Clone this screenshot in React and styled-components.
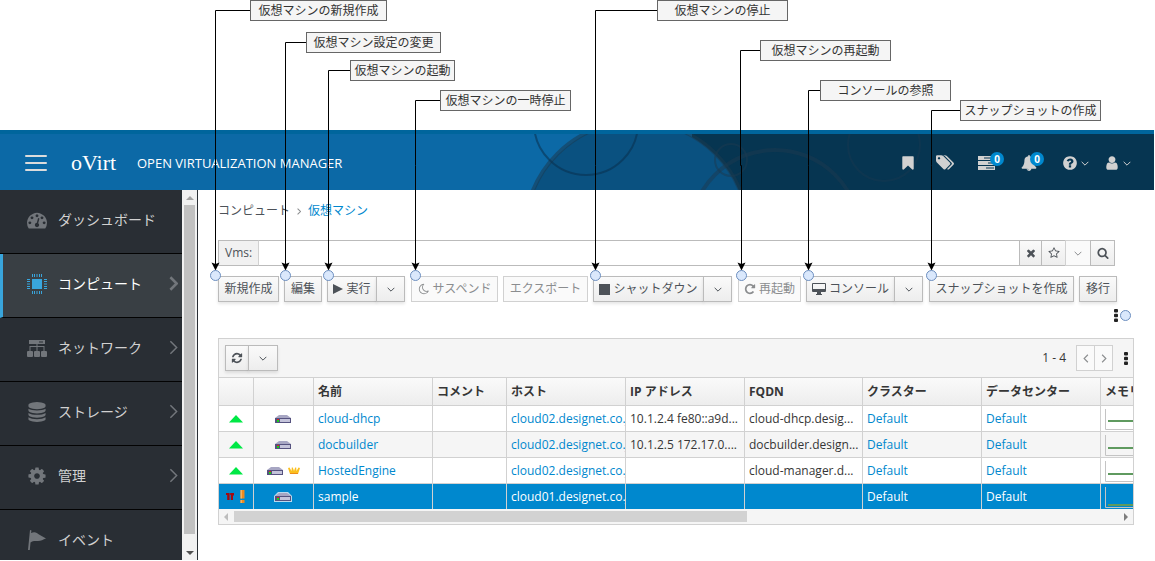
import React from "react";
import styled, { createGlobalStyle, css } from "styled-components";

const GlobalStyle = createGlobalStyle`
  *, *::before, *::after { box-sizing: border-box; }
  body {
    margin: 0;
    background: #fff;
    color: #363636;
    font: 12px/20px "Open Sans", "Noto Sans CJK JP", sans-serif;
  }
  button, input { font: inherit; color: inherit; }
  a { text-decoration: none; }
`;

/* ---------- icons ---------- */

const paths = {
  times: "M1490 1322q0 40-28 68l-136 136q-28 28-68 28t-68-28l-294-294-294 294q-28 28-68 28t-68-28l-136-136q-28-28-28-68t28-68l294-294-294-294q-28-28-28-68t28-68l136-136q28-28 68-28t68 28l294 294 294-294q28-28 68-28t68 28l136 136q28 28 28 68t-28 68l-294 294 294 294q28 28 28 68z",
  search: "M1216 832q0-185-131.5-316.5t-316.5-131.5-316.5 131.5-131.5 316.5 131.5 316.5 316.5 131.5 316.5-131.5 131.5-316.5zm512 832q0 52-38 90t-90 38q-54 0-90-38l-343-342q-179 124-399 124-143 0-273.5-55.5t-225-150-150-225-55.5-273.5 55.5-273.5 150-225 225-150 273.5-55.5 273.5 55.5 225 150 150 225 55.5 273.5q0 220-124 399l343 343q37 37 37 90z",
  star: "M1201 1004l306-297-422-62-189-382-189 382-422 62 306 297-73 421 378-199 377 199zm527-357q0 22-26 48l-363 354 86 500q1 7 1 20 0 50-41 50-19 0-40-12l-449-236-449 236q-22 12-40 12-21 0-31.5-14.5t-10.5-35.5q0-6 2-20l86-500-364-354q-25-27-25-48 0-37 56-46l502-73 225-455q19-41 49-41t49 41l225 455 502 73q56 9 56 46z",
  bookmark: "M1420 128q23 0 44 9 33 13 52.5 41t19.5 62v1289q0 34-19.5 62t-52.5 41q-19 8-44 8-48 0-83-32l-441-424-441 424q-36 33-83 33-23 0-44-9-33-13-52.5-41t-19.5-62v-1289q0-34 19.5-62t52.5-41q21-9 44-9h1048z",
  bell: "M912 1696q0-16-16-16-59 0-101.5-42.5t-42.5-101.5q0-16-16-16t-16 16q0 73 51.5 124.5t124.5 51.5q16 0 16-16zm816-288q0 52-38 90t-90 38h-448q0 106-75 181t-181 75-181-75-75-181h-448q-52 0-90-38t-38-90q50-42 91-88t85-119.5 74.5-158.5 50-206 19.5-260q0-152 117-282.5t307-158.5q-8-19-8-39 0-40 28-68t68-28 68 28 28 68q0 20-8 39 190 28 307 158.5t117 282.5q0 139 19.5 260t50 206 74.5 158.5 85 119.5 91 88z",
  help: "M1024 1376v-192q0-14-9-23t-23-9h-192q-14 0-23 9t-9 23v192q0 14 9 23t23 9h192q14 0 23-9t9-23zm256-672q0-88-55.5-163t-138.5-116-170-41q-243 0-371 213-15 24 8 42l132 100q7 6 19 6 16 0 25-12 53-68 86-92 34-24 86-24 48 0 85.5 26t37.5 59q0 38-20 61t-68 45q-63 28-115.5 86.5t-52.5 125.5v36q0 14 9 23t23 9h192q14 0 23-9t9-23q0-19 21.5-49.5t54.5-49.5q32-18 49-28.5t46-35 44.5-48 28-60.5 12.5-81zm384 192q0 209-103 385.5t-279.5 279.5-385.5 103-385.5-103-279.5-279.5-103-385.5 103-385.5 279.5-279.5 385.5-103 385.5 103 279.5 279.5 103 385.5z",
  user: "M1536 1399q0 109-62.5 187t-150.5 78h-854q-88 0-150.5-78t-62.5-187q0-85 8.5-160.5t31.5-152 58.5-131 94-89 134.5-34.5q131 128 313 128t313-128q76 0 134.5 34.5t94 89 58.5 131 31.5 152 8.5 160.5zm-256-887q0 159-112.5 271.5t-271.5 112.5-271.5-112.5-112.5-271.5 112.5-271.5 271.5-112.5 271.5 112.5 112.5 271.5z",
  tags: "M448 448q0-53-37.5-90.5t-90.5-37.5-90.5 37.5-37.5 90.5 37.5 90.5 90.5 37.5 90.5-37.5 37.5-90.5zm1067 576q0 53-37 90l-491 492q-39 37-91 37-53 0-90-37l-715-716q-38-37-64.5-101t-26.5-117v-416q0-52 38-90t90-38h416q53 0 117 26.5t102 64.5l715 714q37 39 37 91zm384 0q0 53-37 90l-491 492q-39 37-91 37-36 0-59-14t-53-45l470-470q37-37 37-90 0-52-37-91l-715-714q-38-38-102-64.5t-117-26.5h224q53 0 117 26.5t102 64.5l715 714q37 39 37 91z",
  cog: "M1152 896q0-106-75-181t-181-75-181 75-75 181 75 181 181 75 181-75 75-181zm512-109v222q0 12-8 23t-20 13l-185 28q-19 54-39 91 35 50 107 138 10 12 10 25t-9 23q-27 37-99 108t-94 71q-12 0-26-9l-138-108q-44 23-91 38-16 136-29 186-7 28-36 28h-222q-14 0-24.5-8.5t-11.5-21.5l-28-184q-49-16-90-37l-141 107q-10 9-25 9-14 0-25-11-126-114-165-168-7-10-7-23 0-12 8-23 15-21 51-66.5t54-70.5q-27-50-41-99l-183-27q-13-2-21-12.5t-8-23.5v-222q0-12 8-23t19-13l186-28q14-46 39-92-40-57-107-138-10-12-10-24 0-10 9-23 26-36 98.5-107.5t94.5-71.5q13 0 26 10l138 107q44-23 91-38 16-136 29-186 7-28 36-28h222q14 0 24.5 8.5t11.5 21.5l28 184q49 16 90 37l142-107q9-9 24-9 13 0 25 10 129 119 165 170 7 8 7 22 0 12-8 23-15 21-51 66.5t-54 70.5q26 50 41 98l183 28q13 2 21 12.5t8 23.5z",
  database: "M896 768q237 0 443-43t325-127v170q0 69-103 128t-280 93.5-385 34.5-385-34.5-280-93.5-103-128v-170q119 84 325 127t443 43zm0 768q237 0 443-43t325-127v170q0 69-103 128t-280 93.5-385 34.5-385-34.5-280-93.5-103-128v-170q119 84 325 127t443 43zm0-384q237 0 443-43t325-127v170q0 69-103 128t-280 93.5-385 34.5-385-34.5-280-93.5-103-128v-170q119 84 325 127t443 43zm0-1152q208 0 385 34.5t280 93.5 103 128v128q0 69-103 128t-280 93.5-385 34.5-385-34.5-280-93.5-103-128v-128q0-69 103-128t280-93.5 385-34.5z",
  gauge: "M384 1152q0-53-37.5-90.5t-90.5-37.5-90.5 37.5-37.5 90.5 37.5 90.5 90.5 37.5 90.5-37.5 37.5-90.5zm192-448q0-53-37.5-90.5t-90.5-37.5-90.5 37.5-37.5 90.5 37.5 90.5 90.5 37.5 90.5-37.5 37.5-90.5zm428 481l101-382q6-26-7.5-48.5t-38.5-29.5-48 6.5-30 39.5l-101 382q-60 5-107 43.5t-63 98.5q-20 77 20 146t117 89 146-20 89-117q16-60-6-117t-72-91zm660-33q0-53-37.5-90.5t-90.5-37.5-90.5 37.5-37.5 90.5 37.5 90.5 90.5 37.5 90.5-37.5 37.5-90.5zm-640-640q0-53-37.5-90.5t-90.5-37.5-90.5 37.5-37.5 90.5 37.5 90.5 90.5 37.5 90.5-37.5 37.5-90.5zm448 192q0-53-37.5-90.5t-90.5-37.5-90.5 37.5-37.5 90.5 37.5 90.5 90.5 37.5 90.5-37.5 37.5-90.5zm320 448q0 261-141 483-19 29-54 29h-1402q-35 0-54-29-141-221-141-483 0-182 71-348t191-286 286-191 348-71 348 71 286 191 191 286 71 348z",
  refresh: "M1639 1056q0 5-1 7-64 268-268 434.5t-478 166.5q-146 0-282.5-55t-243.5-157l-129 129q-19 19-45 19t-45-19-19-45v-448q0-26 19-45t45-19h448q26 0 45 19t19 45-19 45l-137 137q71 66 161 102t187 36q134 0 250-65t186-179q11-17 53-117 8-23 30-23h192q13 0 22.5 9.5t9.5 22.5zm25-800v448q0 26-19 45t-45 19h-448q-26 0-45-19t-19-45 19-45l138-138q-148-137-349-137-134 0-250 65t-186 179q-11 17-53 117-8 23-30 23h-199q-13 0-22.5-9.5t-9.5-22.5v-7q65-268 270-434.5t480-166.5q146 0 284 55.5t245 156.5l130-129q19-19 45-19t45 19 19 45z",
  repeat: "M1664 256v448q0 26-19 45t-45 19h-448q-42 0-59-40-17-39 14-69l138-138q-148-137-349-137-104 0-198.5 40.5t-163.5 109.5-109.5 163.5-40.5 198.5 40.5 198.5 109.5 163.5 163.5 109.5 198.5 40.5q119 0 225-52t179-147q7-10 23-12 15 0 25 9l137 138q9 8 9.5 20.5t-7.5 22.5q-109 132-264 204.5t-327 72.5q-156 0-298-61t-245-164-164-245-61-298 61-298 164-245 245-164 298-61q147 0 284.5 55.5t244.5 156.5l130-129q29-31 70-14 39 17 39 59z",
  moon: "M1390 1303q-54 9-110 9-182 0-337-90t-245-245-90-337q0-189 104-350-201 60-328.5 229t-127.5 384q0 130 51 248.5t136.5 204 204 136.5 248.5 51q144 0 273.5-61.5t220.5-171.5zm203-85q-94 203-283.5 324.5t-413.5 121.5q-156 0-298-61t-245-164-164-245-61-298q0-153 57.5-292.5t156-241.5 235.5-164.5 290-68.5q44-2 61 39 18 41-15 72-86 78-131.5 181.5t-45.5 218.5q0 148 73 273t198 198 273 73q118 0 228-51 41-18 72 13 14 14 17.5 34t-4.5 38z",
};

const Svg = styled.svg`
  display: block;
  flex: none;
  fill: currentColor;
`;

function Glyph({ name, size = 14, box = "0 0 1792 1792" }) {
  return (
    <Svg width={size} height={size} viewBox={box} aria-hidden="true">
      <path d={paths[name]} />
    </Svg>
  );
}

function Caret({ dir = "down", w = 8, h = 5, weight = 1.5 }) {
  const d = { down: "M1 1l5 5 5-5", right: "M1 1l5 5-5 5", left: "M6 1L1 6l5 5" }[dir];
  return (
    <Svg width={w} height={h} viewBox={dir === "down" ? "0 0 12 7" : "0 0 7 12"} aria-hidden="true">
      <path d={d} fill="none" stroke="currentColor" strokeWidth={weight} />
    </Svg>
  );
}

const Chip = () => (
  <Svg width="20" height="20" viewBox="0 0 20 20" aria-hidden="true">
    <path d="M5 5h10v10H5z" />
    <path d="M5.500 0v3M7.500 0v3M10 0v3M12.500 0v3M14.500 0v3M5.500 17v3M7.500 17v3M10 17v3M12.500 17v3M14.500 17v3M0 5.500h3M0 7.500h3M0 10h3M0 12.500h3M0 14.500h3M17 5.500h3M17 7.500h3M17 10h3M17 12.500h3M17 14.500h3" stroke="currentColor" strokeWidth="1" />
  </Svg>
);

const Cluster = () => (
  <Svg width="20" height="20" viewBox="0 0 20 20" aria-hidden="true">
    <path fillRule="evenodd" d="M2 2h16v4H2zM12 3.500v1h4v-1zM9.500 6h1v2h7v5h-1V9h-6v4h-1V9h-6v4h-1V8h7z" />
    <rect x="0" y="13" width="6" height="6" rx="1" />
    <rect x="7" y="13" width="6" height="6" rx="1" />
    <rect x="14" y="13" width="6" height="6" rx="1" />
  </Svg>
);

const Flag = () => (
  <Svg width="20" height="20" viewBox="0 0 20 20" aria-hidden="true">
    <path d="M3 0l1.500.5L4 3c4-2 6 0 8 1.500L19 8.500c-3 1-5 2.500-8 2.500-3 0-5-.5-7.500 1.500L2.800 20H1z" />
  </Svg>
);

const Tasks = () => (
  <Svg width="17" height="14" viewBox="0 0 17 14" aria-hidden="true">
    <path fillRule="evenodd" d="M0 0h17v4H0zM6 1.500v1h10v-1zM0 5h17v4H0zM10 6.500v1h6v-1zM0 10h17v4H0zM8 11.500v1h8v-1z" />
  </Svg>
);

const Play = () => (
  <Svg width="10" height="12" viewBox="0 0 10 12" aria-hidden="true"><path d="M0 1l10 5-10 5z" /></Svg>
);
const Stop = () => (
  <Svg width="11" height="11" viewBox="0 0 11 11" aria-hidden="true"><path d="M0 0h11v11H0z" /></Svg>
);
const Desktop = () => (
  <Svg width="14" height="12" viewBox="0 0 14 12" aria-hidden="true">
    <path fillRule="evenodd" d="M1 0h12a1 1 0 0 1 1 1v7a1 1 0 0 1-1 1H9v2h1v1H4v-1h1V9H1a1 1 0 0 1-1-1V1a1 1 0 0 1 1-1zM1 1v5h12V1z" />
  </Svg>
);
const Kebab = () => (
  <Svg width="4" height="13" viewBox="0 0 4 13" aria-hidden="true">
    <rect width="4" height="3.400" rx="1" />
    <rect y="4.800" width="4" height="3.400" rx="1" />
    <rect y="9.600" width="4" height="3.400" rx="1" />
  </Svg>
);
const Triangle = ({ dir }) => {
  const d = { up: "M0 4l4-4 4 4z", down: "M0 0h8L4 4z", left: "M4 0v8L0 4z", right: "M0 0v8l4-4z" }[dir];
  const flat = dir === "up" || dir === "down";
  return (
    <Svg width={flat ? 8 : 4} height={flat ? 4 : 8} viewBox={flat ? "0 0 8 4" : "0 0 4 8"} aria-hidden="true">
      <path d={d} />
    </Svg>
  );
};
const UpMark = () => (
  <Svg width="14" height="8" viewBox="0 0 14 8" role="img" aria-label="Up"><path d="M7 0l7 7.500H0z" fill="#00e845" /></Svg>
);
const DownMark = () => (
  <Svg width="8" height="8" viewBox="0 0 8 8" role="img" aria-label="Down">
    <path d="M0 0h3.600v7H1.200v-5H0zM4.200 0H8v2.500H7v4.500H4.800v-5h-.6z" fill="#a5090f" />
  </Svg>
);
const Warn = () => (
  <Svg width="5" height="13" viewBox="0 0 5 13" role="img" aria-label="Warning">
    <path d="M.5 0h4v8.500h-4zM.5 10h4v3h-4z" fill="#f08a1d" />
    <path d="M.5 0h1.500v8.500H.5zM.5 10H2v3H.5z" fill="#f9b25c" />
  </Svg>
);
const Server = ({ glow }) => (
  <Svg width="18" height="10" viewBox="0 0 18 10" aria-hidden="true">
    {glow && <path d="M4 0h10l4 4v6H0V4z" fill="#b9d9ee" />}
    <path d="M5 1h8l4 3H1z" fill="#a7a6c3" />
    <path d="M1 4h16v5H1z" fill="#55527f" />
    <path d="M6 5h10v3H6z" fill="#c4c3da" />
    <path d="M3 5h2v1H3z" fill="#e02020" />
    <path d="M3 6h2v2H3z" fill="#18d018" />
  </Svg>
);
const Crown = () => (
  <Svg width="12" height="8" viewBox="0 0 12 8" aria-hidden="true">
    <path d="M0 1l1.500-.5L3.500 4 3.800.5h1L6 4 7.200.5h1L8.500 4l2-3.500L12 1l-2 6H2z" fill="#fbbf1e" />
    <path d="M2.500 6h1v1h-1zM4.500 6h1v1h-1zM6.500 6h1v1h-1zM8.500 6h1v1h-1z" fill="#e05a12" />
  </Svg>
);

/* ---------- page frame ---------- */

const Page = styled.div`
  position: relative;
  display: flex;
  flex-direction: column;
  height: 100vh;
  padding: 130px 1px 1px 0;
  overflow: hidden;
`;

const Masthead = styled.header`
  position: relative;
  display: flex;
  align-items: center;
  flex: none;
  height: 60px;
  padding: 2px 24px 0 25px;
  border-top: 4px solid #00659c;
  background: #0c69a6;
  color: #fff;
`;

const MastheadArt = styled.svg`
  position: absolute;
  top: 0;
  right: 0;
  height: 56px;
  width: 624px;
`;

const MenuButton = styled.button`
  display: flex;
  flex-direction: column;
  gap: 5px;
  width: 22px;
  padding: 0;
  border: 0;
  background: none;
`;
const MenuBar = styled.span`
  height: 2px;
  border-radius: 1px;
  background: #dcdcdc;
`;

const Brand = styled.a`
  margin-left: 24px;
  width: 66px;
  color: #fff;
  font: 22px/24px "Liberation Serif", serif;
`;

const Product = styled.span`
  position: relative;
  font-size: 13px;
  white-space: nowrap;
`;

const Utilities = styled.nav`
  position: relative;
  display: flex;
  align-items: center;
  gap: 15px;
  margin-left: auto;
  color: #d1d1d1;
`;

const Utility = styled.button`
  position: relative;
  display: flex;
  align-items: center;
  justify-content: flex-start;
  gap: 3px;
  width: ${(p) => p.$w}px;
  height: 24px;
  padding: 0;
  border: 0;
  background: none;
`;

const Badge = styled.span`
  position: absolute;
  top: 1px;
  left: ${(p) => p.$left}px;
  width: 14px;
  height: 14px;
  border-radius: 7px;
  background: #0088ce;
  color: #fff;
  font-size: 10px;
  font-weight: 700;
  line-height: 14px;
  text-align: center;
`;

const Body = styled.div`
  display: flex;
  flex: 1;
  min-height: 0;
`;

const Sidebar = styled.nav`
  flex: none;
  width: 182px;
  overflow: hidden;
  background: #292e34;
`;

const NavItem = styled.a`
  display: flex;
  align-items: center;
  gap: 11px;
  height: 64px;
  padding: 0 4px 4px 27px;
  border-bottom: 1px solid #030303;
  color: #d1d1d1;
  font-size: 14px;
  ${(p) => p.$active && css`
    padding-left: 24px;
    border-left: 3px solid #39a5dc;
    background: #393f44;
    color: #fff;
  `}
`;
const NavIcon = styled.span`
  display: flex;
  justify-content: center;
  width: 20px;
  color: ${(p) => (p.$active ? "#39a5dc" : "#72767b")};
`;
const NavArrow = styled.span`
  margin-left: auto;
  color: #72767b;
`;

const SideScroll = styled.div`
  display: flex;
  flex-direction: column;
  align-items: center;
  flex: none;
  width: 16px;
  padding: 6px 0 5px;
  border-right: 1px solid #292e34;
  background: #f1f1f1;
  color: #a3a3a3;
  & > :last-child { color: #505050; }
`;
const SideThumb = styled.div`
  flex: 1;
  width: 11px;
  margin: 5px 0 17px;
  background: #c1c1c1;
`;

const Main = styled.main`
  flex: 1;
  min-width: 0;
  padding: 10px 20px 0;
`;

const Crumbs = styled.nav`
  display: flex;
  align-items: center;
  gap: 7px;
  height: 22px;
  color: #8b8d8f;
`;
const Crumb = styled.a`
  color: ${(p) => (p.$current ? "#0088ce" : "#4d5258")};
`;

const control = css`
  display: flex;
  align-items: center;
  justify-content: center;
  height: 26px;
  padding: 0;
  border: 1px solid #bbb;
  background: linear-gradient(#fafafa, #ededed);
  color: #4d5258;
  white-space: nowrap;
`;

const SearchBar = styled.form`
  display: flex;
  height: 26px;
  margin: 18px 19px 10px 0;
`;
const SearchLabel = styled.label`
  width: 41px;
  padding: 2px 0 0 6px;
  border: 1px solid #bbb;
  border-right-color: #d1d1d1;
  background: #f1f1f1;
  color: #4d5258;
`;
const SearchInput = styled.input`
  flex: 1;
  min-width: 0;
  padding: 0 6px;
  border: solid #bbb;
  border-width: 1px 0;
  outline: 0;
`;
const SearchButton = styled.button`
  ${control}
  width: ${(p) => p.$w}px;
  margin-left: -1px;
  &:disabled { background: #fafafa; border-color: #d1d1d1; color: #8b8d8f; }
`;

const Actions = styled.div`
  display: flex;
  gap: 5px;
`;
const Action = styled.button`
  ${control}
  gap: 3px;
  width: ${(p) => p.$w}px;
  box-shadow: 0 2px 3px rgba(3, 3, 3, 0.1);
  &:disabled { background: #fafafa; border-color: #d1d1d1; color: #8b8d8f; box-shadow: none; }
`;
const Split = styled.div`
  display: flex;
  margin-right: 1px;
  & > button + button { margin-left: -1px; }
`;

const MoreRow = styled.div`
  display: flex;
  justify-content: flex-end;
  padding: 7px 16px 16px 0;
`;
const PlainButton = styled.button`
  padding: 0;
  border: 0;
  background: none;
  color: #222;
`;

const Panel = styled.section`
  border: 1px solid #d1d1d1;
  background: #f5f5f5;
  overflow: hidden;
`;
const PanelBar = styled.div`
  display: flex;
  align-items: center;
  height: 38px;
  padding: 0 5px 0 6px;
`;
const Range = styled.span`
  margin: 0 10px 0 auto;
`;
const Pager = styled.div`
  display: flex;
  margin-right: 11px;
  & > button { box-shadow: none; border-color: #d1d1d1; background: #fafafa; color: #8b8d8f; }
  & > button + button { margin-left: -1px; }
`;

const Grid = styled.table`
  width: 1001px;
  table-layout: fixed;
  border-collapse: separate;
  border-spacing: 0;
`;
const Col = styled.col`
  width: ${(p) => p.$w}px;
`;
const HeadCell = styled.th`
  height: 29px;
  padding: 0 4px;
  border: solid #d1d1d1;
  border-width: 1px 1px 1px 0;
  background: linear-gradient(#fafafa, #ededed);
  font-weight: 700;
  text-align: left;
  white-space: nowrap;
`;
const Row = styled.tr`
  height: 26px;
  background: #fff;
  &:nth-child(even) { background: #f5f5f5; }
  &[aria-selected="true"] {
    height: 25px;
    background: #0088ce;
    color: #fff;
    --link: #fff;
  }
`;
const Cell = styled.td`
  padding: 0 0 0 4px;
  border: solid #d1d1d1;
  border-width: 0 1px 1px 0;
  overflow: hidden;
  white-space: nowrap;
  line-height: 20px;
  tr:last-child > & { border-bottom: 0; }
`;
const Icons = styled.span`
  display: flex;
  align-items: center;
  justify-content: center;
  gap: ${(p) => p.$gap || 4}px;
  padding-right: 5px;
`;
const CellLink = styled.a`
  color: var(--link, #0088ce);
`;
const Spark = styled.svg`
  display: block;
`;

const GridScroll = styled.div`
  display: flex;
  align-items: center;
  height: 15px;
  padding: 0 5px;
  color: #bdbdbd;
  & > :last-child { color: #7d7d7d; }
`;
const GridTrack = styled.div`
  flex: 1;
  margin: 0 6px;
`;
const GridThumb = styled.div`
  width: 58%;
  height: 11px;
  background: #d2d2d2;
`;

/* ---------- callouts pinned over the page ---------- */

const Overlay = styled.div`
  position: absolute;
  inset: 0;
  pointer-events: none;
`;
const Leaders = styled.svg`
  position: absolute;
  top: 0;
  left: 0;
`;
const Callout = styled.div`
  position: absolute;
  left: ${(p) => p.$x}px;
  top: ${(p) => p.$y}px;
  width: ${(p) => p.$w}px;
  height: 21px;
  border: 1px solid #666;
  background: #f5f5f5;
  color: #333;
  line-height: 19px;
  text-align: center;
  white-space: nowrap;
`;

const callouts = [
  { text: "仮想マシンの新規作成", x: 250, y: 0, w: 137, pin: 215 },
  { text: "仮想マシン設定の変更", x: 306, y: 32, w: 135, pin: 285 },
  { text: "仮想マシンの起動", x: 350, y: 60, w: 105, pin: 328 },
  { text: "仮想マシンの一時停止", x: 440, y: 90, w: 131, pin: 415 },
  { text: "仮想マシンの停止", x: 657, y: 0, w: 131, pin: 595 },
  { text: "仮想マシンの再起動", x: 760, y: 40, w: 131, pin: 741, jog: 740 },
  { text: "コンソールの参照", x: 820, y: 80, w: 131, pin: 808 },
  { text: "スナップショットの作成", x: 960, y: 100, w: 141, pin: 931 },
];

function Annotations() {
  return (
    <Overlay>
      <Leaders width="1155" height="330" viewBox="0 0 1155 330" aria-hidden="true">
        {callouts.map(({ x, y, pin, jog = pin }) => (
          <g key={pin}>
            <path
              d={`M${x} ${y + 10.5}H${jog + 0.5}V165.500H${pin + 0.5}V266`}
              fill="none"
              stroke="#000"
            />
            <path d={`M${pin + 0.5} 270.500l-4-8 4 1.500 4-1.500z`} />
            <circle cx={pin + 0.5} cy="275.500" r="5" fill="#dae8fc" stroke="#6c8ebf" />
          </g>
        ))}
        <circle cx="1125.500" cy="315.500" r="5" fill="#dae8fc" stroke="#6c8ebf" />
      </Leaders>
      {callouts.map((c) => (
        <Callout key={c.text} $x={c.x} $y={c.y} $w={c.w}>{c.text}</Callout>
      ))}
    </Overlay>
  );
}

/* ---------- data ---------- */

const nav = [
  { label: "ダッシュボード", icon: <Glyph name="gauge" size={20} /> },
  { label: "コンピュート", icon: <Chip />, active: true, more: true },
  { label: "ネットワーク", icon: <Cluster />, more: true },
  { label: "ストレージ", icon: <Glyph name="database" size={20} />, more: true },
  { label: "管理", icon: <Glyph name="cog" size={20} />, more: true },
  { label: "イベント", icon: <Flag /> },
];

const columns = [
  ["", 35], ["", 60], ["名前", 119], ["コメント", 74], ["ホスト", 119],
  ["IP アドレス", 119], ["FQDN", 118], ["クラスター", 119], ["データセンター", 119], ["メモリー", 119],
];

const vms = [
  { name: "cloud-dhcp", host: "cloud02.designet.co.jp", ip: "10.1.2.4 fe80::a9d...", fqdn: "cloud-dhcp.desig...", level: 15 },
  { name: "docbuilder", host: "cloud02.designet.co.jp", ip: "10.1.2.5 172.17.0....", fqdn: "docbuilder.design...", level: 16 },
  { name: "HostedEngine", host: "cloud02.designet.co.jp", ip: "", fqdn: "cloud-manager.d...", level: 16, engine: true },
  { name: "sample", host: "cloud01.designet.co.jp", ip: "", fqdn: "", level: 21, down: true },
];

function SplitAction({ w, label, children }) {
  return (
    <Split>
      <Action type="button" $w={w}>{children}</Action>
      <Action type="button" $w={29} aria-label={label}><Caret /></Action>
    </Split>
  );
}

export default function App() {
  return (
    <Page>
      <GlobalStyle />
      <Masthead>
        <MastheadArt viewBox="530 134 624 56" aria-hidden="true">
          <path d="M692 134H1154V190H692z" fill="#063551" />
          <circle cx="636.500" cy="233" r="111" fill="#0a5180" />
          <g fill="none" stroke="#1c3a50" strokeOpacity="0.55">
            <circle cx="636.500" cy="233" r="112" strokeWidth="4" />
            <circle cx="586" cy="123" r="52" strokeWidth="2" stroke="#0a2f4c" />
            <circle cx="775" cy="235" r="85" strokeWidth="4" strokeOpacity="0.5" />
            <circle cx="731" cy="160" r="16" strokeWidth="2" strokeOpacity="0.5" />
            <circle cx="884" cy="145" r="36" strokeWidth="2" strokeOpacity="0.4" />
          </g>
        </MastheadArt>
        <MenuButton type="button" aria-label="Menu">
          <MenuBar /><MenuBar /><MenuBar />
        </MenuButton>
        <Brand href="#">oVirt</Brand>
        <Product>OPEN VIRTUALIZATION MANAGER</Product>
        <Utilities>
          <Utility type="button" $w={21} aria-label="Bookmarks"><Glyph name="bookmark" size={16} /></Utility>
          <Utility type="button" $w={27} aria-label="Tags"><Glyph name="tags" size={18} box="0 0 1900 1900" /></Utility>
          <Utility type="button" $w={28} aria-label="Tasks"><Tasks /><Badge $left={12}>0</Badge></Utility>
          <Utility type="button" $w={26} aria-label="Notifications"><Glyph name="bell" size={16} /><Badge $left={9}>0</Badge></Utility>
          <Utility type="button" $w={27} aria-label="Help"><Glyph name="help" size={16} /><Caret /></Utility>
          <Utility type="button" $w={26} aria-label="Account"><Glyph name="user" size={16} /><Caret /></Utility>
        </Utilities>
      </Masthead>

      <Body>
        <Sidebar>
          {nav.map((n) => (
            <NavItem key={n.label} href="#" $active={n.active}>
              <NavIcon $active={n.active}>{n.icon}</NavIcon>
              {n.label}
              {n.more && <NavArrow><Caret dir="right" w={9} h={15} weight={n.active ? 2 : 1.2} /></NavArrow>}
            </NavItem>
          ))}
        </Sidebar>
        <SideScroll>
          <Triangle dir="up" />
          <SideThumb />
          <Triangle dir="down" />
        </SideScroll>

        <Main>
          <Crumbs>
            <Crumb href="#">コンピュート</Crumb>
            <Caret dir="right" w={4} h={7} weight={1.8} />
            <Crumb href="#" $current>仮想マシン</Crumb>
          </Crumbs>

          <SearchBar>
            <SearchLabel htmlFor="query">Vms:</SearchLabel>
            <SearchInput id="query" type="text" />
            <SearchButton type="button" $w={23} aria-label="Clear"><Glyph name="times" size={12} /></SearchButton>
            <SearchButton type="button" $w={25} aria-label="Bookmark"><Glyph name="star" size={12} /></SearchButton>
            <SearchButton type="button" $w={26} aria-label="Saved searches" disabled><Caret /></SearchButton>
            <SearchButton type="submit" $w={25} aria-label="Search"><Glyph name="search" size={12} /></SearchButton>
          </SearchBar>

          <Actions>
            <Action type="button" $w={61}>新規作成</Action>
            <Action type="button" $w={38}>編集</Action>
            <SplitAction w={50} label="実行オプション"><Play />実行</SplitAction>
            <Action type="button" $w={87} disabled><Glyph name="moon" size={12} />サスペンド</Action>
            <Action type="button" $w={85} disabled>エクスポート</Action>
            <SplitAction w={111} label="シャットダウンオプション"><Stop />シャットダウン</SplitAction>
            <Action type="button" $w={63} disabled><Glyph name="repeat" size={12} />再起動</Action>
            <SplitAction w={89} label="コンソールオプション"><Desktop />コンソール</SplitAction>
            <Action type="button" $w={145}>スナップショットを作成</Action>
            <Action type="button" $w={38}>移行</Action>
          </Actions>

          <MoreRow>
            <PlainButton type="button" aria-label="More actions"><Kebab /></PlainButton>
          </MoreRow>

          <Panel>
            <PanelBar>
              <Split>
                <Action type="button" $w={24} aria-label="Refresh"><Glyph name="refresh" size={12} /></Action>
                <Action type="button" $w={30} aria-label="Refresh interval"><Caret /></Action>
              </Split>
              <Range>1 - 4</Range>
              <Pager>
                <Action type="button" $w={19} aria-label="Previous"><Caret dir="left" w={6} h={9} /></Action>
                <Action type="button" $w={19} aria-label="Next"><Caret dir="right" w={6} h={9} /></Action>
              </Pager>
              <PlainButton type="button" aria-label="Columns"><Kebab /></PlainButton>
            </PanelBar>
            <Grid>
              <colgroup>{columns.map(([, w], i) => <Col key={i} $w={w} />)}</colgroup>
              <thead>
                <tr>{columns.map(([title], i) => <HeadCell key={i} scope="col">{title}</HeadCell>)}</tr>
              </thead>
              <tbody>
                {vms.map((vm) => (
                  <Row key={vm.name} aria-selected={Boolean(vm.down)}>
                    <Cell><Icons $gap={6}>{vm.down ? <><DownMark /><Warn /></> : <UpMark />}</Icons></Cell>
                    <Cell><Icons>{<Server glow={vm.down} />}{vm.engine && <Crown />}</Icons></Cell>
                    <Cell><CellLink href="#">{vm.name}</CellLink></Cell>
                    <Cell />
                    <Cell><CellLink href="#">{vm.host}</CellLink></Cell>
                    <Cell>{vm.ip}</Cell>
                    <Cell>{vm.fqdn}</Cell>
                    <Cell><CellLink href="#">Default</CellLink></Cell>
                    <Cell><CellLink href="#">Default</CellLink></Cell>
                    <Cell>
                      <Spark width="100" height="22" viewBox="0 2 100 22" aria-hidden="true">
                        <path d="M.5 3v20.500H100" fill="none" stroke="#c4c4c4" />
                        <path d={`M3 ${vm.level}H100`} fill="none" stroke="#5f9a5f" strokeWidth="2" />
                      </Spark>
                    </Cell>
                  </Row>
                ))}
              </tbody>
            </Grid>
            <GridScroll>
              <Triangle dir="left" />
              <GridTrack><GridThumb /></GridTrack>
              <Triangle dir="right" />
            </GridScroll>
          </Panel>
        </Main>
      </Body>
      <Annotations />
    </Page>
  );
}
